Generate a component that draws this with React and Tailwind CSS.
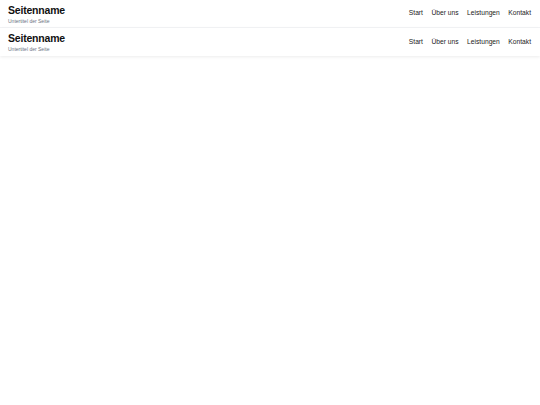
const links = ['Start', 'Über uns', 'Leistungen', 'Kontakt'];

const Header = ({ className = '' }) => (
  <header
    className={`flex h-[28px] items-center justify-between bg-white pl-[8px] pr-[9px] ${className}`}
  >
    <div className="flex flex-col">
      <span className="text-[10.5px] font-bold leading-[13px] tracking-[-0.2px] text-[#111]">
        Seitenname
      </span>
      <span className="mt-[1px] text-[5px] leading-[6px] text-gray-500">Untertitel der Seite</span>
    </div>
    <nav className="flex gap-[8.5px] text-[6.7px]">
      {links.map((l) => (
        <a key={l} href="#" className="leading-none text-[#222]">
          {l}
        </a>
      ))}
    </nav>
  </header>
);

export default function App() {
  return (
    <div className="min-h-[405px] bg-white font-['Liberation_Sans',Arial,sans-serif]">
      <Header className="border-b border-gray-100" />
      <Header className="shadow-[0_1px_3px_rgba(0,0,0,0.08)]" />
    </div>
  );
}
